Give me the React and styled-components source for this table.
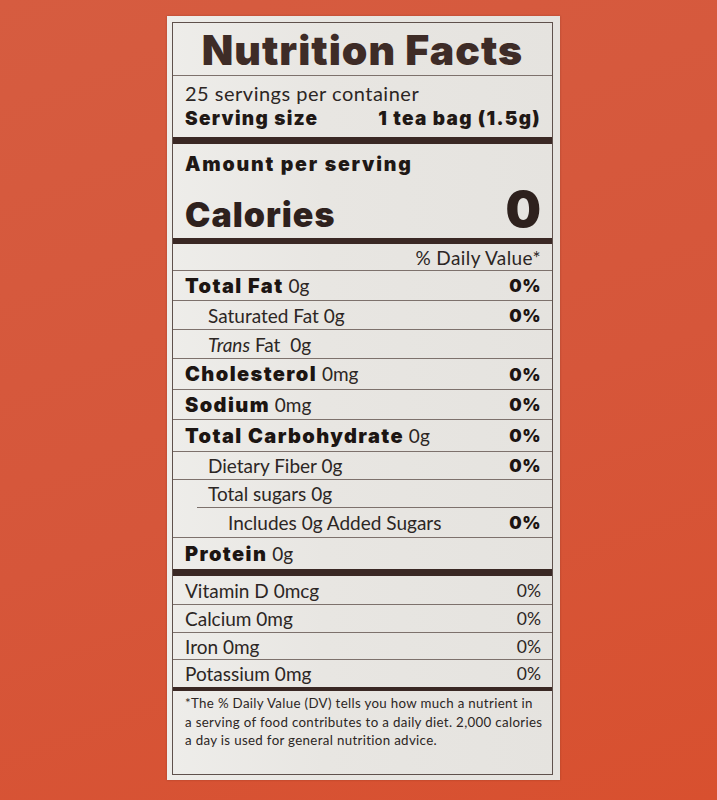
import React from "react";
import styled, { createGlobalStyle } from "styled-components";

const GlobalStyle = createGlobalStyle`
  html, body { margin: 0; padding: 0; }
  body {
    width: 717px;
    height: 800px;
    overflow: hidden;
    background: #d6583b;
  }
`;

const HEAVY = `"Inter", "Liberation Sans", sans-serif`;
const BODY = `"Lato", "Open Sans", sans-serif`;

const Page = styled.div`
  box-sizing: border-box;
  width: 717px;
  height: 800px;
  padding: 16px 0 0 167px;
  display: flex;
  align-items: flex-start;
  background: linear-gradient(160deg, #d65c40 0%, #d6563a 55%, #d8502f 100%);
`;

const Panel = styled.div`
  box-sizing: border-box;
  width: 393px;
  height: 764px;
  padding: 6px 7px 5px 5px;
  background: linear-gradient(90deg, #eeedea 0%, #e8e6e2 40%, #e5e3df 100%);
  box-shadow: 0 0 2px rgba(80, 30, 20, 0.35);
`;

const Label = styled.div`
  box-sizing: border-box;
  height: 100%;
  border: 1px solid #5f514c;
  display: flex;
  flex-direction: column;
  color: #2c2624;
`;

const Title = styled.h1`
  margin: 0;
  height: 53px;
  flex: none;
  border-bottom: 1px solid #7d716c;
  display: flex;
  align-items: center;
  justify-content: center;
  font-family: ${HEAVY};
  font-weight: 900;
  font-size: 41px;
  letter-spacing: 1px;
  color: #3e2c27;
  padding-top: 2px;
  box-sizing: border-box;
`;

const Block = styled.div`
  flex: none;
  box-sizing: content-box;
  height: ${(p) => p.$h}px;
  padding: ${(p) => p.$pad || "0 11px 0 12px"};
  border-bottom: ${(p) => p.$rule}px solid #3a2824;
  display: flex;
  flex-direction: column;
`;

const PlainLine = styled.div`
  font-family: ${BODY};
  font-size: 20px;
  line-height: 26px;
  letter-spacing: 0.5px;
`;

const SplitLine = styled.div`
  display: flex;
  justify-content: space-between;
  align-items: baseline;
  font-family: ${HEAVY};
  font-weight: 900;
  font-size: 19px;
  letter-spacing: 1.3px;
  line-height: 26px;
  color: #1f1815;
`;

const AmountLine = styled.div`
  font-family: ${HEAVY};
  font-weight: 900;
  font-size: 19.5px;
  letter-spacing: 1.8px;
  line-height: 24px;
  margin-top: 8px;
  color: #1f1815;
`;

const CaloriesLine = styled.div`
  display: flex;
  justify-content: space-between;
  align-items: baseline;
  margin-top: 8px;
  font-family: ${HEAVY};
  font-weight: 900;
  color: #2e211d;
  line-height: 1;
`;

const CalWord = styled.span`
  font-size: 34px;
  letter-spacing: 1px;
`;

const CalNum = styled.span`
  font-size: 50px;
`;

const DvHead = styled.div`
  flex: none;
  height: 26px;
  border-bottom: 1px solid #7d716c;
  display: flex;
  align-items: center;
  justify-content: flex-end;
  padding: 0 11px 0 12px;
  font-family: ${BODY};
  font-size: 19px;
  letter-spacing: 0.4px;
`;

const Row = styled.div`
  flex: none;
  box-sizing: content-box;
  height: ${(p) => p.$h}px;
  display: flex;
  align-items: center;
  justify-content: space-between;
  margin-left: ${(p) => p.$inset || 0}px;
  padding: 0 11px 0 ${(p) => 12 + (p.$indent || 0) - (p.$inset || 0)}px;
  border-bottom: ${(p) => p.$rule || 1}px solid
    ${(p) => (p.$rule > 1 ? "#3a2824" : "#7d716c")};
`;

const Name = styled.span`
  font-family: ${BODY};
  font-size: 19px;
  color: #2c2624;
`;

const Strong = styled.span`
  font-family: ${HEAVY};
  font-weight: 900;
  font-size: 20px;
  color: #1c1512;
  letter-spacing: 1.4px;
`;

const Pct = styled.span`
  font-family: ${(p) => (p.$bold ? HEAVY : BODY)};
  font-weight: ${(p) => (p.$bold ? 900 : 400)};
  font-size: 17.5px;
  letter-spacing: ${(p) => (p.$bold ? 0.5 : 0)}px;
  color: ${(p) => (p.$bold ? "#1c1512" : "#2c2624")};
`;

const Foot = styled.p`
  margin: 0;
  padding: 3px 4px 0 12px;
  font-family: ${BODY};
  font-size: 13.3px;
  line-height: 18.5px;
  letter-spacing: 0.33px;
  white-space: nowrap;
  color: #2c2624;
`;

const nutrients = [
  { bold: "Total Fat", amt: "0g", pct: "0%", h: 29 },
  { name: "Saturated Fat 0g", pct: "0%", indent: 23, h: 28 },
  { italic: "Trans", name: " Fat\u00a0 0g", indent: 23, h: 28 },
  { bold: "Cholesterol", amt: "0mg", pct: "0%", h: 30 },
  { bold: "Sodium", amt: "0mg", pct: "0%", h: 29 },
  { bold: "Total Carbohydrate", amt: "0g", pct: "0%", h: 31 },
  { name: "Dietary Fiber 0g", pct: "0%", indent: 23, h: 27 },
  { name: "Total sugars 0g", indent: 23, h: 27, inset: 24 },
  { name: "Includes 0g Added Sugars", pct: "0%", indent: 43, h: 29 },
  { bold: "Protein", amt: "0g", h: 31, rule: 7 },
];

const vitamins = [
  { name: "Vitamin D 0mcg", h: 28 },
  { name: "Calcium 0mg", h: 27 },
  { name: "Iron 0mg", h: 26 },
  { name: "Potassium 0mg", h: 27, rule: 4 },
];

export default function App() {
  return (
    <>
      <GlobalStyle />
      <Page>
        <Panel>
          <Label>
            <Title>Nutrition Facts</Title>
            <Block $h={57} $rule={7} $pad="4px 11px 0 12px">
              <PlainLine>25 servings per container</PlainLine>
              <SplitLine>
                <span>Serving size</span>
                <span>1 tea bag (1.5g)</span>
              </SplitLine>
            </Block>
            <Block $h={94} $rule={6}>
              <AmountLine>Amount per serving</AmountLine>
              <CaloriesLine>
                <CalWord>Calories</CalWord>
                <CalNum>0</CalNum>
              </CaloriesLine>
            </Block>
            <DvHead>% Daily Value*</DvHead>
            {nutrients.map((n, i) => (
              <Row
                key={i}
                $h={n.h}
                $indent={n.indent}
                $inset={n.inset}
                $rule={n.rule}
              >
                <span>
                  {n.bold && <Strong>{n.bold}</Strong>}
                  {n.amt && <Name> {n.amt}</Name>}
                  {n.italic && (
                    <Name>
                      <i>{n.italic}</i>
                    </Name>
                  )}
                  {n.name && <Name>{n.name}</Name>}
                </span>
                {n.pct && <Pct $bold>{n.pct}</Pct>}
              </Row>
            ))}
            {vitamins.map((v, i) => (
              <Row key={i} $h={v.h} $rule={v.rule}>
                <Name>{v.name}</Name>
                <Pct>0%</Pct>
              </Row>
            ))}
            <Foot>
              *The % Daily Value (DV) tells you how much a nutrient in
              <br />
              a serving of food contributes to a daily diet. 2,000 calories
              <br />
              a day is used for general nutrition advice.
            </Foot>
          </Label>
        </Panel>
      </Page>
    </>
  );
}
